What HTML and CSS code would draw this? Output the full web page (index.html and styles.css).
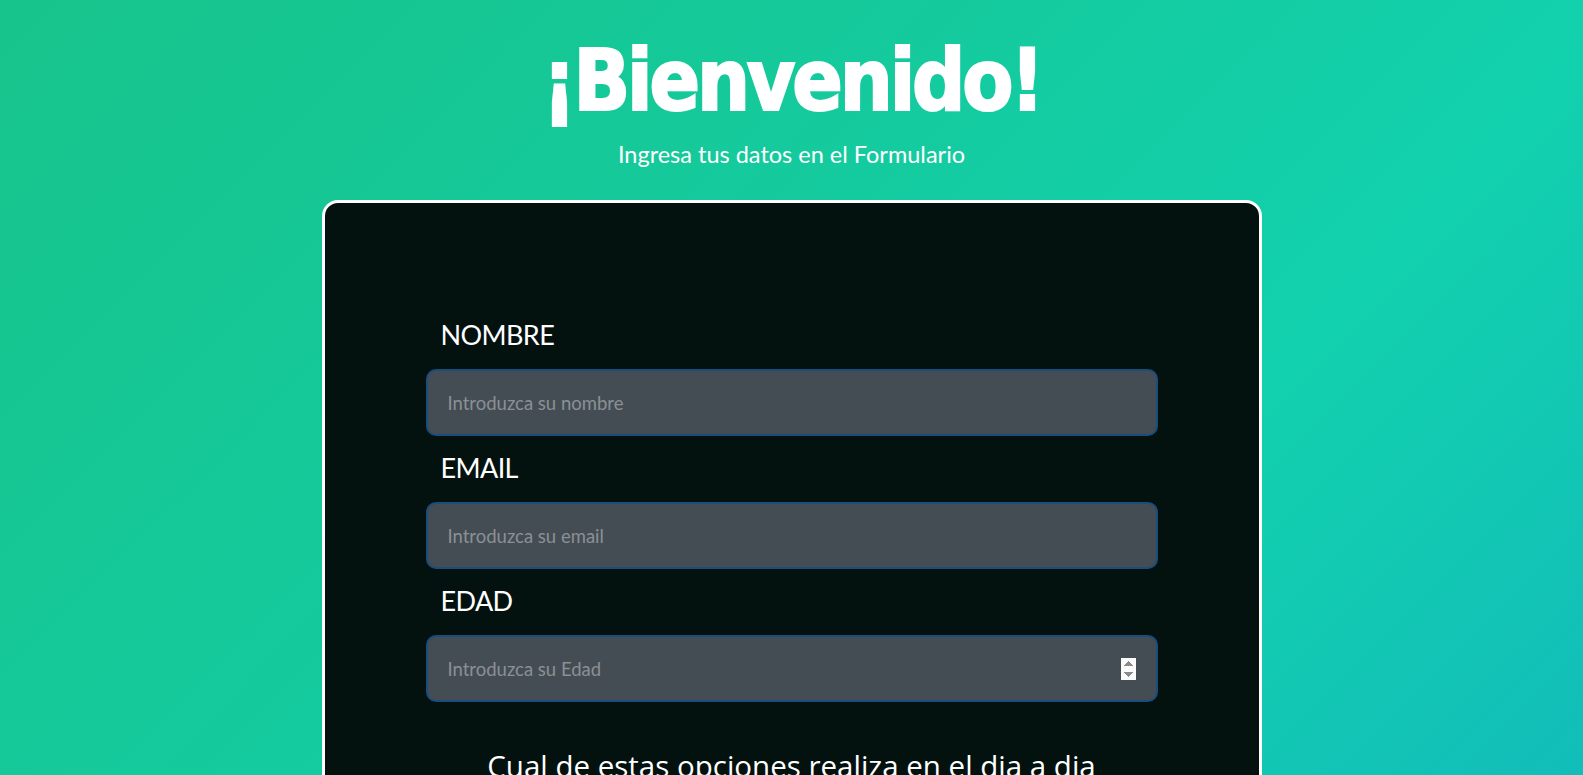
FILE: index.html
```html
<!DOCTYPE html>
<html lang="es">
<head>
<meta charset="utf-8">
<title>Bienvenido</title>
<link rel="stylesheet" href="styles.css">
</head>
<body>
<header class="hero">
  <h1 class="hero-title"><span class="hero-title-text">¡Bienvenido!</span></h1>
  <p class="hero-sub">Ingresa tus datos en el Formulario</p>
</header>
<main class="card">
  <form class="form">
    <label class="field-label" for="nombre">NOMBRE</label>
    <input class="field-input" id="nombre" type="text" placeholder="Introduzca su nombre">
    <label class="field-label" for="email">EMAIL</label>
    <input class="field-input" id="email" type="email" placeholder="Introduzca su email">
    <label class="field-label" for="edad">EDAD</label>
    <input class="field-input" id="edad" type="number" placeholder="Introduzca su Edad">
    <p class="question">Cual de estas opciones realiza en el dia a dia</p>
  </form>
</main>
</body>
</html>
```
FILE: styles.css
```css
html {
  min-height: 100%;
  background: linear-gradient(135deg, #17c48b 0%, #15c99a 35%, #12d1ae 70%, #12bdb9 100%) fixed;
}
body {
  margin: 0;
  color: #fff;
  font-family: "Lato", "Open Sans", sans-serif;
}
.hero {
  display: flex;
  flex-direction: column;
  align-items: center;
  padding-top: 31px;
}
.hero-title {
  margin: 0;
  font-family: "DejaVu Sans", sans-serif;
  font-stretch: condensed;
  font-weight: 700;
  font-size: 80px;
  line-height: 100px;
  letter-spacing: -3px;
}
.hero-title-text {
  display: inline-block;
  transform: scale(1.035, 1.07);
  -webkit-text-stroke: 2px #fff;
}
.hero-sub {
  margin: 8px 0 0;
  font-size: 23.5px;
  line-height: 30px;
}
.card {
  box-sizing: border-box;
  width: 940px;
  margin: 31px auto 40px;
  border: 3px solid #fff;
  border-radius: 16px;
  background: #03110f;
  padding: 100px 0 60px;
}
.form {
  width: 732px;
  margin: 0 auto;
  display: flex;
  flex-direction: column;
}
.field-label {
  display: block;
  margin: 15px 0 17px 15px;
  font-size: 27px;
  line-height: 34px;
  letter-spacing: -0.6px;
}
.field-input {
  box-sizing: border-box;
  height: 67px;
  width: 100%;
  border: 2px solid #1a4d7c;
  border-radius: 10px;
  background: #444d54;
  color: #fff;
  padding: 0 20px;
  font-family: "Lato", sans-serif;
  font-size: 18.5px;
  outline: none;
}
.field-input::placeholder {
  color: #8b9094;
}
.field-input::-webkit-inner-spin-button {
  opacity: 1;
}
.question {
  margin: 46px 0 0;
  text-align: center;
  font-family: "Open Sans", sans-serif;
  font-size: 29.5px;
  line-height: 36px;
}
```
